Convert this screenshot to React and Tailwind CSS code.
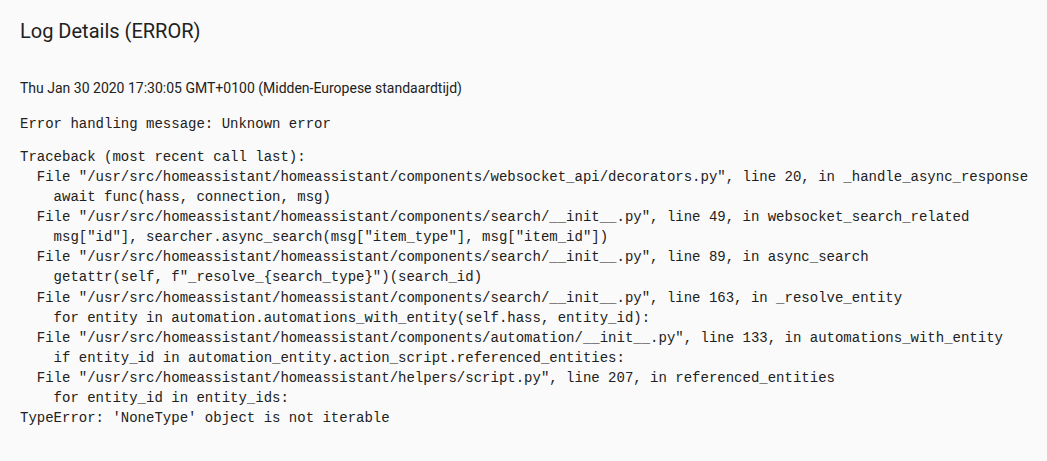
export default function App() {
  const trace = `Traceback (most recent call last):
  File "/usr/src/homeassistant/homeassistant/components/websocket_api/decorators.py", line 20, in _handle_async_response
    await func(hass, connection, msg)
  File "/usr/src/homeassistant/homeassistant/components/search/__init__.py", line 49, in websocket_search_related
    msg["id"], searcher.async_search(msg["item_type"], msg["item_id"])
  File "/usr/src/homeassistant/homeassistant/components/search/__init__.py", line 89, in async_search
    getattr(self, f"_resolve_{search_type}")(search_id)
  File "/usr/src/homeassistant/homeassistant/components/search/__init__.py", line 163, in _resolve_entity
    for entity in automation.automations_with_entity(self.hass, entity_id):
  File "/usr/src/homeassistant/homeassistant/components/automation/__init__.py", line 133, in automations_with_entity
    if entity_id in automation_entity.action_script.referenced_entities:
  File "/usr/src/homeassistant/homeassistant/helpers/script.py", line 207, in referenced_entities
    for entity_id in entity_ids:
TypeError: 'NoneType' object is not iterable`;
  return (
    <div className="w-[1047px] h-[461px] bg-[#fafafa] text-[#212121] overflow-hidden">
      <div className="px-5 pt-[15px]">
        <h2 className="font-['Roboto',sans-serif] text-[20px] leading-[32px] font-normal">
          Log Details (ERROR)
        </h2>
        <div className="mt-[33px] font-['Roboto',sans-serif] text-[14px] leading-[16px]">
          Thu Jan 30 2020 17:30:05 GMT+0100 (Midden-Europese standaardtijd)
        </div>
        <pre className="mt-[18px] font-['Liberation_Mono',monospace] text-[14px] leading-[20px]">
          Error handling message: Unknown error
        </pre>
        <pre className="mt-[13px] font-['Liberation_Mono',monospace] text-[14px] leading-[20.08px]">
          {trace}
        </pre>
      </div>
    </div>
  );
}
